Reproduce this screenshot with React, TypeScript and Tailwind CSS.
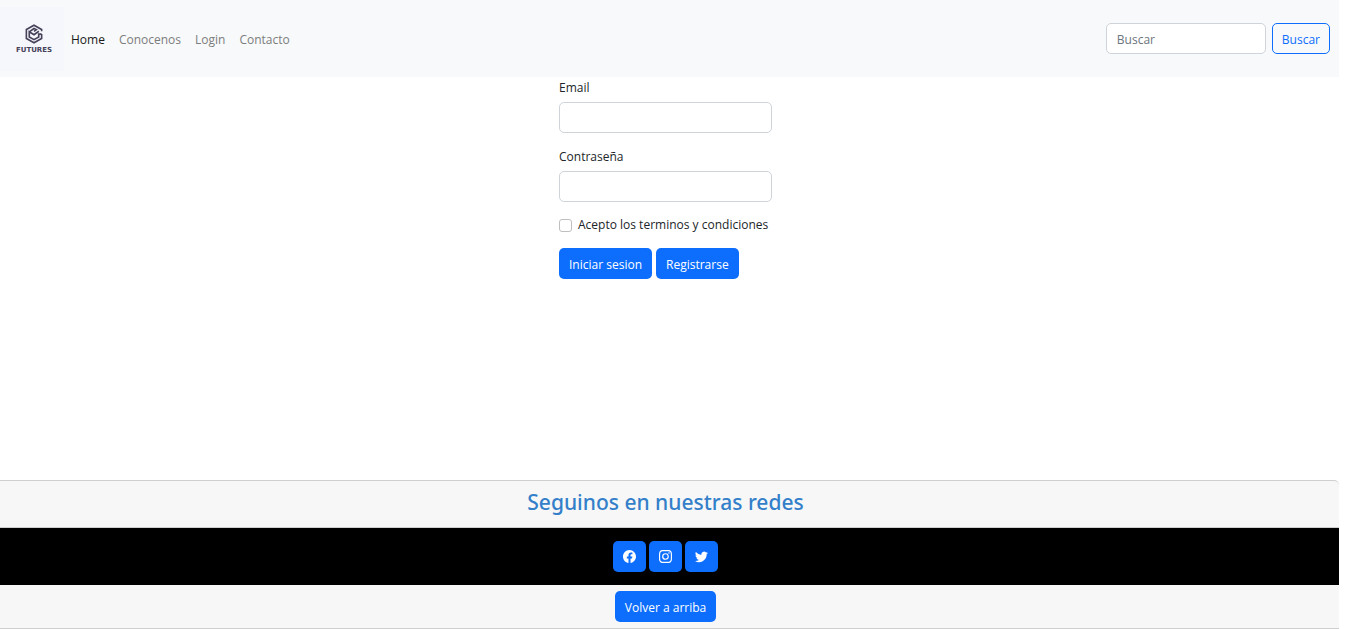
import { BsFacebook, BsInstagram, BsTwitter } from "react-icons/bs";

const links = [
  { label: "Home", active: true },
  { label: "Conocenos", active: false },
  { label: "Login", active: false },
  { label: "Contacto", active: false },
];

const networks = [
  { label: "Facebook", Icon: BsFacebook },
  { label: "Instagram", Icon: BsInstagram },
  { label: "Twitter", Icon: BsTwitter },
];

const primary = "h-[31px] rounded-[5px] bg-[#0d6efd] px-[10px] text-white";
const textButton = `${primary} pt-[2px]`;
const field = "h-[31px] rounded-[5px] border border-[#ced4da] bg-white px-[10px] pt-px placeholder:text-[#6c757d]";

function Logo() {
  return (
    <a href="#" aria-label="Futures" className="flex size-16 flex-col items-center justify-center bg-[#f6f7fc] pl-1 text-[#46425a]">
      <svg viewBox="0 0 20 22" className="h-[20px] w-[20px]" fill="none" stroke="currentColor" strokeWidth="1.8">
        <path d="M18.4 8V6L10 1.3 1.6 6v10L10 20.7l8.4-4.7v-5" />
        <path d="M18.4 11.2h-3.2v3L10 17.2l-5.2-3V8.6l5.2 3.2 5.4-3.8" />
        <path d="M4.8 8.6 10 5l2.6 1.2-2.6 2" />
      </svg>
      <span className="mt-[2px] font-['DejaVu_Sans',sans-serif] text-[7px] leading-[8px] font-bold">FUTURES</span>
    </a>
  );
}

export default function App() {
  return (
    <div className="flex min-h-screen flex-col bg-white pr-2 font-['Open_Sans','Noto_Sans',sans-serif] text-[12px] leading-[22px] text-[#212529]">
      <nav className="flex h-[77px] items-center justify-between bg-[#f8f9fa] pr-[9px]">
        <div className="flex items-center">
          <Logo />
          <ul className="ml-[7px] flex gap-[14px] pt-[2px]">
            {links.map((link) => (
              <li key={link.label}>
                <a href="#" className={link.active ? "text-[#191919]" : "text-[#7c7d7d]"}>{link.label}</a>
              </li>
            ))}
          </ul>
        </div>
        <form className="flex gap-[6px]">
          <input type="search" aria-label="Buscar" placeholder="Buscar" className={`${field} w-40`} />
          <button type="button" className="h-[31px] rounded-[5px] border border-[#0d6efd] px-[9px] pt-[2px] text-[#0d6efd]">Buscar</button>
        </form>
      </nav>

      <main className="flex flex-1 justify-center pr-2">
        <form className="flex w-[213px] flex-col gap-[13px]">
          <div className="flex flex-col gap-[3px]">
            <label htmlFor="email">Email</label>
            <input id="email" type="email" className={field} />
          </div>
          <div className="flex flex-col gap-[3px]">
            <label htmlFor="password">Contraseña</label>
            <input id="password" type="password" className={field} />
          </div>
          <div className="flex h-5 items-center gap-[6px] whitespace-nowrap">
            <input id="terms" type="checkbox" className="size-[13px] shrink-0 appearance-none rounded-[3px] border border-[#bfbfbf] bg-white checked:bg-[#0d6efd]" />
            <label htmlFor="terms">Acepto los terminos y condiciones</label>
          </div>
          <div className="flex gap-1">
            <button type="button" className={textButton}>Iniciar sesion</button>
            <button type="button" className={textButton}>Registrarse</button>
          </div>
        </form>
      </main>

      <footer className="rounded-tr-[5px] border-y border-[#cfcfcf] bg-[#f7f7f7] text-center">
        <div className="border-b border-[#cfcfcf] pt-[6px] pr-2 pb-[10px]">
          <h2 className="font-['Noto_Sans',sans-serif] text-[21px] leading-[30px] font-medium text-[#337fca]">Seguinos en nuestras redes</h2>
        </div>
        <div className="flex justify-center gap-[3px] bg-black py-[13px] pr-2">
          {networks.map(({ label, Icon }) => (
            <button key={label} type="button" aria-label={label} className={primary}>
              <Icon className="size-[13px]" />
            </button>
          ))}
        </div>
        <div className="py-[6px] pr-2">
          <button type="button" className={textButton}>Volver a arriba</button>
        </div>
      </footer>
    </div>
  );
}
